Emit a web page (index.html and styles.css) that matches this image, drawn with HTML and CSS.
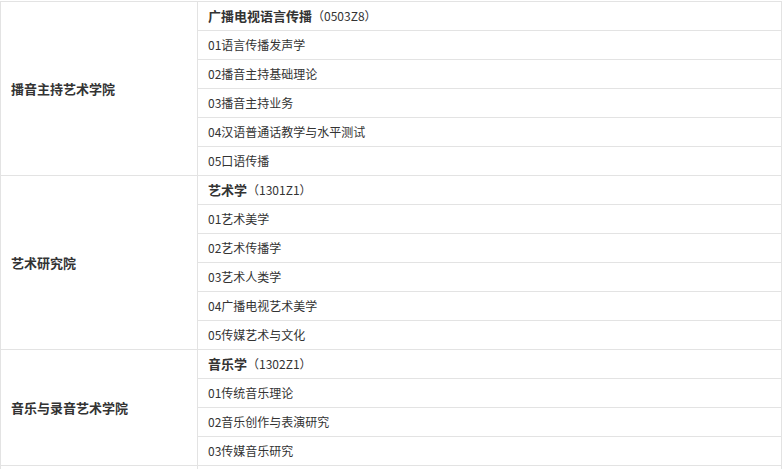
FILE: index.html
```html
<!DOCTYPE html>
<html lang="zh">
<head>
<meta charset="utf-8">
<link rel="stylesheet" href="styles.css">
</head>
<body>
<table class="majors">
  <tbody>
    <tr><td class="school" rowspan="6">播音主持艺术学院</td><td class="item"><b>广播电视语言传播</b>（0503Z8）</td></tr>
    <tr><td class="item">01语言传播发声学</td></tr>
    <tr><td class="item">02播音主持基础理论</td></tr>
    <tr><td class="item">03播音主持业务</td></tr>
    <tr><td class="item">04汉语普通话教学与水平测试</td></tr>
    <tr><td class="item">05口语传播</td></tr>
    <tr><td class="school" rowspan="6">艺术研究院</td><td class="item"><b>艺术学</b>（1301Z1）</td></tr>
    <tr><td class="item">01艺术美学</td></tr>
    <tr><td class="item">02艺术传播学</td></tr>
    <tr><td class="item">03艺术人类学</td></tr>
    <tr><td class="item">04广播电视艺术美学</td></tr>
    <tr><td class="item">05传媒艺术与文化</td></tr>
    <tr><td class="school" rowspan="4">音乐与录音艺术学院</td><td class="item"><b>音乐学</b>（1302Z1）</td></tr>
    <tr><td class="item">01传统音乐理论</td></tr>
    <tr><td class="item">02音乐创作与表演研究</td></tr>
    <tr><td class="item">03传媒音乐研究</td></tr>
    <tr><td class="school" rowspan="2">电视学院</td><td class="item"><b>广播电视艺术学</b></td></tr>
    <tr><td class="item">01电视艺术</td></tr>
  </tbody>
</table>
</body>
</html>
```

FILE: styles.css
```css
html, body {
  margin: 0;
  padding: 0;
  background: #fff;
}
body {
  padding-top: 1px;
  font-family: "Noto Sans CJK SC", "Liberation Sans", sans-serif;
  font-size: 12px;
  color: #333;
}
.majors {
  width: 782px;
  border-collapse: collapse;
  table-layout: fixed;
}
.majors td {
  border: 1px solid #e3e3e3;
  padding: 0 10px;
  height: 28px;
  box-sizing: border-box;
  line-height: 16px;
  vertical-align: middle;
  white-space: nowrap;
}
.majors .school {
  width: 197px;
  font-weight: bold;
  font-size: 13px;
}
.majors .item {
  height: 29px;
}
.majors .item b {
  font-size: 13px;
}
```
